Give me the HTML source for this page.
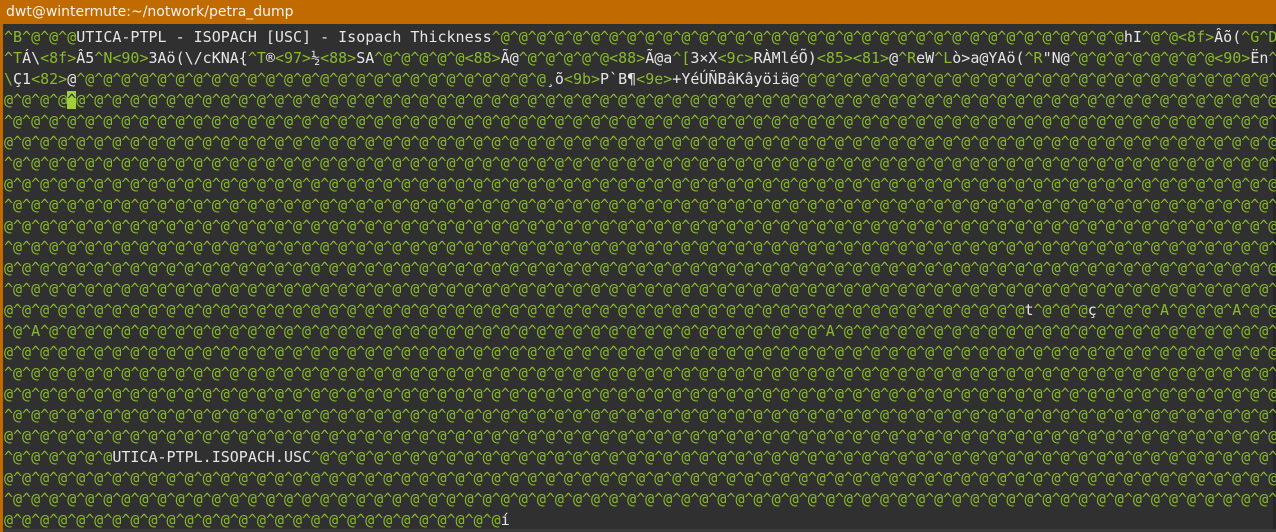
<!DOCTYPE html>
<html><head><meta charset="utf-8"><style>
html,body{margin:0;padding:0;width:1276px;height:532px;overflow:hidden;background:#303030;}
#title{position:absolute;left:0;top:0;width:1276px;height:24px;background:#c06a00;color:#f2f2f2;font:14px "DejaVu Sans","Liberation Sans",sans-serif;line-height:24px;padding-left:6px;box-sizing:border-box;}
#lb{position:absolute;left:0;top:24px;width:3px;height:508px;background:#c06a00;}
#rb{position:absolute;right:0;top:24px;width:3px;height:508px;background:#262626;}
#bb{position:absolute;left:3px;bottom:0;width:1273px;height:3px;background:#3c3c3c;}
#term{position:absolute;left:4px;top:27px;font:15px "DejaVu Sans Mono","Liberation Mono",monospace;color:#e6e6e6;white-space:normal;}
#term div{height:21px;line-height:21px;white-space:pre;}
.g{color:#8ab92d;}
.c{background:#9fd03a;color:#303030;}
</style></head><body>
<div id="title">dwt@wintermute:~/notwork/petra_dump</div>
<div id="lb"></div><div id="rb"></div><div id="bb"></div>
<div id="term">
<div><span class="g">^B^@^@^@</span>UTICA-PTPL - ISOPACH [USC] - Isopach Thickness<span class="g">^@^@^@^@^@^@^@^@^@^@^@^@^@^@^@^@^@^@^@^@^@^@^@^@^@^@^@^@^@^@^@^@^@^@^@</span>hI<span class="g">^@^@&lt;8f&gt;</span>Âõ(<span class="g">^G^D</span></div>
<div><span class="g">^T</span>Á\<span class="g">&lt;8f&gt;</span>Â5<span class="g">^N&lt;90&gt;</span>3Aö(\/cKNA{<span class="g">^T</span>®<span class="g">&lt;97&gt;</span>½<span class="g">&lt;88&gt;</span>SA<span class="g">^@^@^@^@^@&lt;88&gt;</span>Ã@<span class="g">^@^@^@^@^@&lt;88&gt;</span>Ã@a<span class="g">^[</span>3×X<span class="g">&lt;9c&gt;</span>RÀMléÕ)<span class="g">&lt;85&gt;&lt;81&gt;</span>@<span class="g">^R</span>eW<span class="g">^L</span>ò&gt;a@YAö(<span class="g">^R</span>"N@<span class="g">^@^@^@^@^@^@^@^@&lt;90&gt;</span>Ën<span class="g">^</span></div>
<div><span class="g">\</span>Ç1<span class="g">&lt;82&gt;</span>@<span class="g">^@^@^@^@^@^@^@^@^@^@^@^@^@^@^@^@^@^@^@^@^@^@^@^@^@^@</span>¸õ<span class="g">&lt;9b&gt;</span>P`B¶<span class="g">&lt;9e&gt;</span>+YéÚÑBâKâyöiä@<span class="g">^@^@^@^@^@^@^@^@^@^@^@^@^@^@^@^@^@^@^@^@^@^@^@^@^@^@^</span></div>
<div class="g">@^@^@^@<span class="c">^</span>@^@^@^@^@^@^@^@^@^@^@^@^@^@^@^@^@^@^@^@^@^@^@^@^@^@^@^@^@^@^@^@^@^@^@^@^@^@^@^@^@^@^@^@^@^@^@^@^@^@^@^@^@^@^@^@^@^@^@^@^@^@^@^@^@^@^@^@</div>
<div class="g">^@^@^@^@^@^@^@^@^@^@^@^@^@^@^@^@^@^@^@^@^@^@^@^@^@^@^@^@^@^@^@^@^@^@^@^@^@^@^@^@^@^@^@^@^@^@^@^@^@^@^@^@^@^@^@^@^@^@^@^@^@^@^@^@^@^@^@^@^@^@^</div>
<div class="g">@^@^@^@^@^@^@^@^@^@^@^@^@^@^@^@^@^@^@^@^@^@^@^@^@^@^@^@^@^@^@^@^@^@^@^@^@^@^@^@^@^@^@^@^@^@^@^@^@^@^@^@^@^@^@^@^@^@^@^@^@^@^@^@^@^@^@^@^@^@^@</div>
<div class="g">^@^@^@^@^@^@^@^@^@^@^@^@^@^@^@^@^@^@^@^@^@^@^@^@^@^@^@^@^@^@^@^@^@^@^@^@^@^@^@^@^@^@^@^@^@^@^@^@^@^@^@^@^@^@^@^@^@^@^@^@^@^@^@^@^@^@^@^@^@^@^</div>
<div class="g">@^@^@^@^@^@^@^@^@^@^@^@^@^@^@^@^@^@^@^@^@^@^@^@^@^@^@^@^@^@^@^@^@^@^@^@^@^@^@^@^@^@^@^@^@^@^@^@^@^@^@^@^@^@^@^@^@^@^@^@^@^@^@^@^@^@^@^@^@^@^@</div>
<div class="g">^@^@^@^@^@^@^@^@^@^@^@^@^@^@^@^@^@^@^@^@^@^@^@^@^@^@^@^@^@^@^@^@^@^@^@^@^@^@^@^@^@^@^@^@^@^@^@^@^@^@^@^@^@^@^@^@^@^@^@^@^@^@^@^@^@^@^@^@^@^@^</div>
<div class="g">@^@^@^@^@^@^@^@^@^@^@^@^@^@^@^@^@^@^@^@^@^@^@^@^@^@^@^@^@^@^@^@^@^@^@^@^@^@^@^@^@^@^@^@^@^@^@^@^@^@^@^@^@^@^@^@^@^@^@^@^@^@^@^@^@^@^@^@^@^@^@</div>
<div class="g">^@^@^@^@^@^@^@^@^@^@^@^@^@^@^@^@^@^@^@^@^@^@^@^@^@^@^@^@^@^@^@^@^@^@^@^@^@^@^@^@^@^@^@^@^@^@^@^@^@^@^@^@^@^@^@^@^@^@^@^@^@^@^@^@^@^@^@^@^@^@^</div>
<div class="g">@^@^@^@^@^@^@^@^@^@^@^@^@^@^@^@^@^@^@^@^@^@^@^@^@^@^@^@^@^@^@^@^@^@^@^@^@^@^@^@^@^@^@^@^@^@^@^@^@^@^@^@^@^@^@^@^@^@^@^@^@^@^@^@^@^@^@^@^@^@^@</div>
<div class="g">^@^@^@^@^@^@^@^@^@^@^@^@^@^@^@^@^@^@^@^@^@^@^@^@^@^@^@^@^@^@^@^@^@^@^@^@^@^@^@^@^@^@^@^@^@^@^@^@^@^@^@^@^@^@^@^@^@^@^@^@^@^@^@^@^@^@^@^@^@^@^</div>
<div><span class="g">@^@^@^@^@^@^@^@^@^@^@^@^@^@^@^@^@^@^@^@^@^@^@^@^@^@^@^@^@^@^@^@^@^@^@^@^@^@^@^@^@^@^@^@^@^@^@^@^@^@^@^@^@^@^@^@^@</span>t<span class="g">^@^@^@</span>ç<span class="g">^@^@^@^A^@^@^@^A^@^@</span></div>
<div class="g">^@^A^@^@^@^@^@^@^@^@^@^@^@^@^@^@^@^@^@^@^@^@^@^@^@^@^@^@^@^@^@^@^@^@^@^@^@^@^@^@^@^@^@^@^@^A^@^@^@^@^@^@^@^@^@^@^@^@^@^@^@^@^@^@^@^@^@^@^@^@^</div>
<div class="g">@^@^@^@^@^@^@^@^@^@^@^@^@^@^@^@^@^@^@^@^@^@^@^@^@^@^@^@^@^@^@^@^@^@^@^@^@^@^@^@^@^@^@^@^@^@^@^@^@^@^@^@^@^@^@^@^@^@^@^@^@^@^@^@^@^@^@^@^@^@^@</div>
<div class="g">^@^@^@^@^@^@^@^@^@^@^@^@^@^@^@^@^@^@^@^@^@^@^@^@^@^@^@^@^@^@^@^@^@^@^@^@^@^@^@^@^@^@^@^@^@^@^@^@^@^@^@^@^@^@^@^@^@^@^@^@^@^@^@^@^@^@^@^@^@^@^</div>
<div class="g">@^@^@^@^@^@^@^@^@^@^@^@^@^@^@^@^@^@^@^@^@^@^@^@^@^@^@^@^@^@^@^@^@^@^@^@^@^@^@^@^@^@^@^@^@^@^@^@^@^@^@^@^@^@^@^@^@^@^@^@^@^@^@^@^@^@^@^@^@^@^@</div>
<div class="g">^@^@^@^@^@^@^@^@^@^@^@^@^@^@^@^@^@^@^@^@^@^@^@^@^@^@^@^@^@^@^@^@^@^@^@^@^@^@^@^@^@^@^@^@^@^@^@^@^@^@^@^@^@^@^@^@^@^@^@^@^@^@^@^@^@^@^@^@^@^@^</div>
<div class="g">@^@^@^@^@^@^@^@^@^@^@^@^@^@^@^@^@^@^@^@^@^@^@^@^@^@^@^@^@^@^@^@^@^@^@^@^@^@^@^@^@^@^@^@^@^@^@^@^@^@^@^@^@^@^@^@^@^@^@^@^@^@^@^@^@^@^@^@^@^@^@</div>
<div><span class="g">^@^@^@^@^@^@</span>UTICA-PTPL.ISOPACH.USC<span class="g">^@^@^@^@^@^@^@^@^@^@^@^@^@^@^@^@^@^@^@^@^@^@^@^@^@^@^@^@^@^@^@^@^@^@^@^@^@^@^@^@^@^@^@^@^@^@^@^@^@^@^@^@^@^</span></div>
<div class="g">@^@^@^@^@^@^@^@^@^@^@^@^@^@^@^@^@^@^@^@^@^@^@^@^@^@^@^@^@^@^@^@^@^@^@^@^@^@^@^@^@^@^@^@^@^@^@^@^@^@^@^@^@^@^@^@^@^@^@^@^@^@^@^@^@^@^@^@^@^@^@</div>
<div class="g">^@^@^@^@^@^@^@^@^@^@^@^@^@^@^@^@^@^@^@^@^@^@^@^@^@^@^@^@^@^@^@^@^@^@^@^@^@^@^@^@^@^@^@^@^@^@^@^@^@^@^@^@^@^@^@^@^@^@^@^@^@^@^@^@^@^@^@^@^@^@^</div>
<div><span class="g">@^@^@^@^@^@^@^@^@^@^@^@^@^@^@^@^@^@^@^@^@^@^@^@^@^@^@^@</span>í</div>
</div>
</body></html>
